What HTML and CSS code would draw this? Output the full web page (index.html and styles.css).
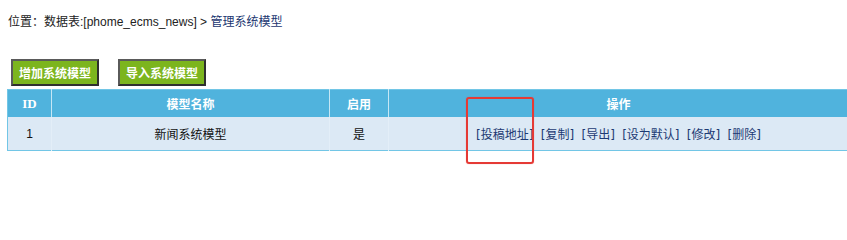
FILE: index.html
```html
<!DOCTYPE html>
<html lang="zh-CN">
<head>
<meta charset="utf-8">
<title>管理系统模型</title>
<link rel="stylesheet" href="styles.css">
</head>
<body>
<div class="page">
<div class="loc">位置：数据表:[phome_ecms_news] &gt; <a class="link" href="#">管理系统模型</a></div>
<div class="actions">
  <button class="btn" type="button">增加系统模型</button>
  <button class="btn" type="button">导入系统模型</button>
</div>
<div class="tablewrap">
  <table class="grid">
    <colgroup>
      <col class="c-id">
      <col class="c-name">
      <col class="c-on">
      <col class="c-op">
    </colgroup>
    <thead>
      <tr>
        <th class="th-id">ID</th>
        <th>模型名称</th>
        <th>启用</th>
        <th>操作</th>
      </tr>
    </thead>
    <tbody>
      <tr>
        <td>1</td>
        <td>新闻系统模型</td>
        <td>是</td>
        <td class="ops"><a href="#">[投稿地址]</a> <a href="#">[复制]</a> <a href="#">[导出]</a> <a href="#">[设为默认]</a> <a href="#">[修改]</a> <a href="#">[删除]</a></td>
      </tr>
    </tbody>
  </table>
  <div class="mark"></div>
</div>
</div>
</body>
</html>
```

FILE: styles.css
```css
html, body {
  margin: 0;
  padding: 0;
  background: #ffffff;
}
body {
  font-family: "Liberation Sans", "Noto Sans CJK SC", sans-serif;
  font-size: 12px;
  color: #222222;
}
.page {
  width: 847px;
  height: 235px;
  overflow: hidden;
  padding-top: 14px;
  box-sizing: border-box;
}
.loc {
  margin-left: 8px;
  height: 16px;
  line-height: 16px;
  white-space: nowrap;
}
.link {
  color: #1a3670;
  text-decoration: none;
}
.actions {
  display: flex;
  gap: 19px;
  margin-top: 29px;
  padding-left: 11px;
}
.btn {
  box-sizing: border-box;
  height: 27px;
  width: 88px;
  padding: 0;
  margin: 0;
  background: #7cb51e;
  color: #ffffff;
  font-family: "Noto Sans CJK SC", sans-serif;
  font-weight: bold;
  font-size: 12px;
  border: 2px solid #2f2f2f;
  border-top-color: #5a5a5a;
  border-left-color: #5a5a5a;
  cursor: pointer;
}
.tablewrap {
  position: relative;
  margin-top: 3px;
  margin-left: 7px;
  width: 842px;
}
.grid {
  width: 842px;
  table-layout: fixed;
  border-collapse: collapse;
  border: 1px solid #72c6e6;
}
.c-id { width: 44px; }
.c-name { width: 278px; }
.c-on { width: 59px; }
.grid th {
  height: 27px;
  padding: 0;
  background: #50b3dd;
  color: #ffffff;
  font-weight: bold;
  font-size: 12px;
  font-family: "Noto Sans CJK SC", sans-serif;
  text-align: center;
  border-left: 1px solid #c6e7f5;
}
.grid th:first-child { border-left: none; }
.grid th.th-id {
  font-family: "Liberation Serif", serif;
  font-size: 13px;
}
.grid td {
  height: 33px;
  padding: 0;
  background: #dce9f5;
  text-align: center;
  font-size: 12px;
  color: #111111;
  border-left: 1px solid #e3eef8;
}
.grid td:first-child { border-left: none; }
.ops {
  font-family: "DejaVu Sans", "Noto Sans CJK SC", sans-serif;
}
.ops a {
  color: #1d3a73;
  text-decoration: none;
}
.ops a + a {
  margin-left: 3.5px;
}
.mark {
  position: absolute;
  z-index: 5;
  left: 459px;
  top: 8px;
  width: 64px;
  height: 63px;
  border: 2px solid #e53a35;
  border-radius: 3px;
  box-shadow: 0 0 1px rgba(229,58,53,0.5);
  pointer-events: none;
}
```
